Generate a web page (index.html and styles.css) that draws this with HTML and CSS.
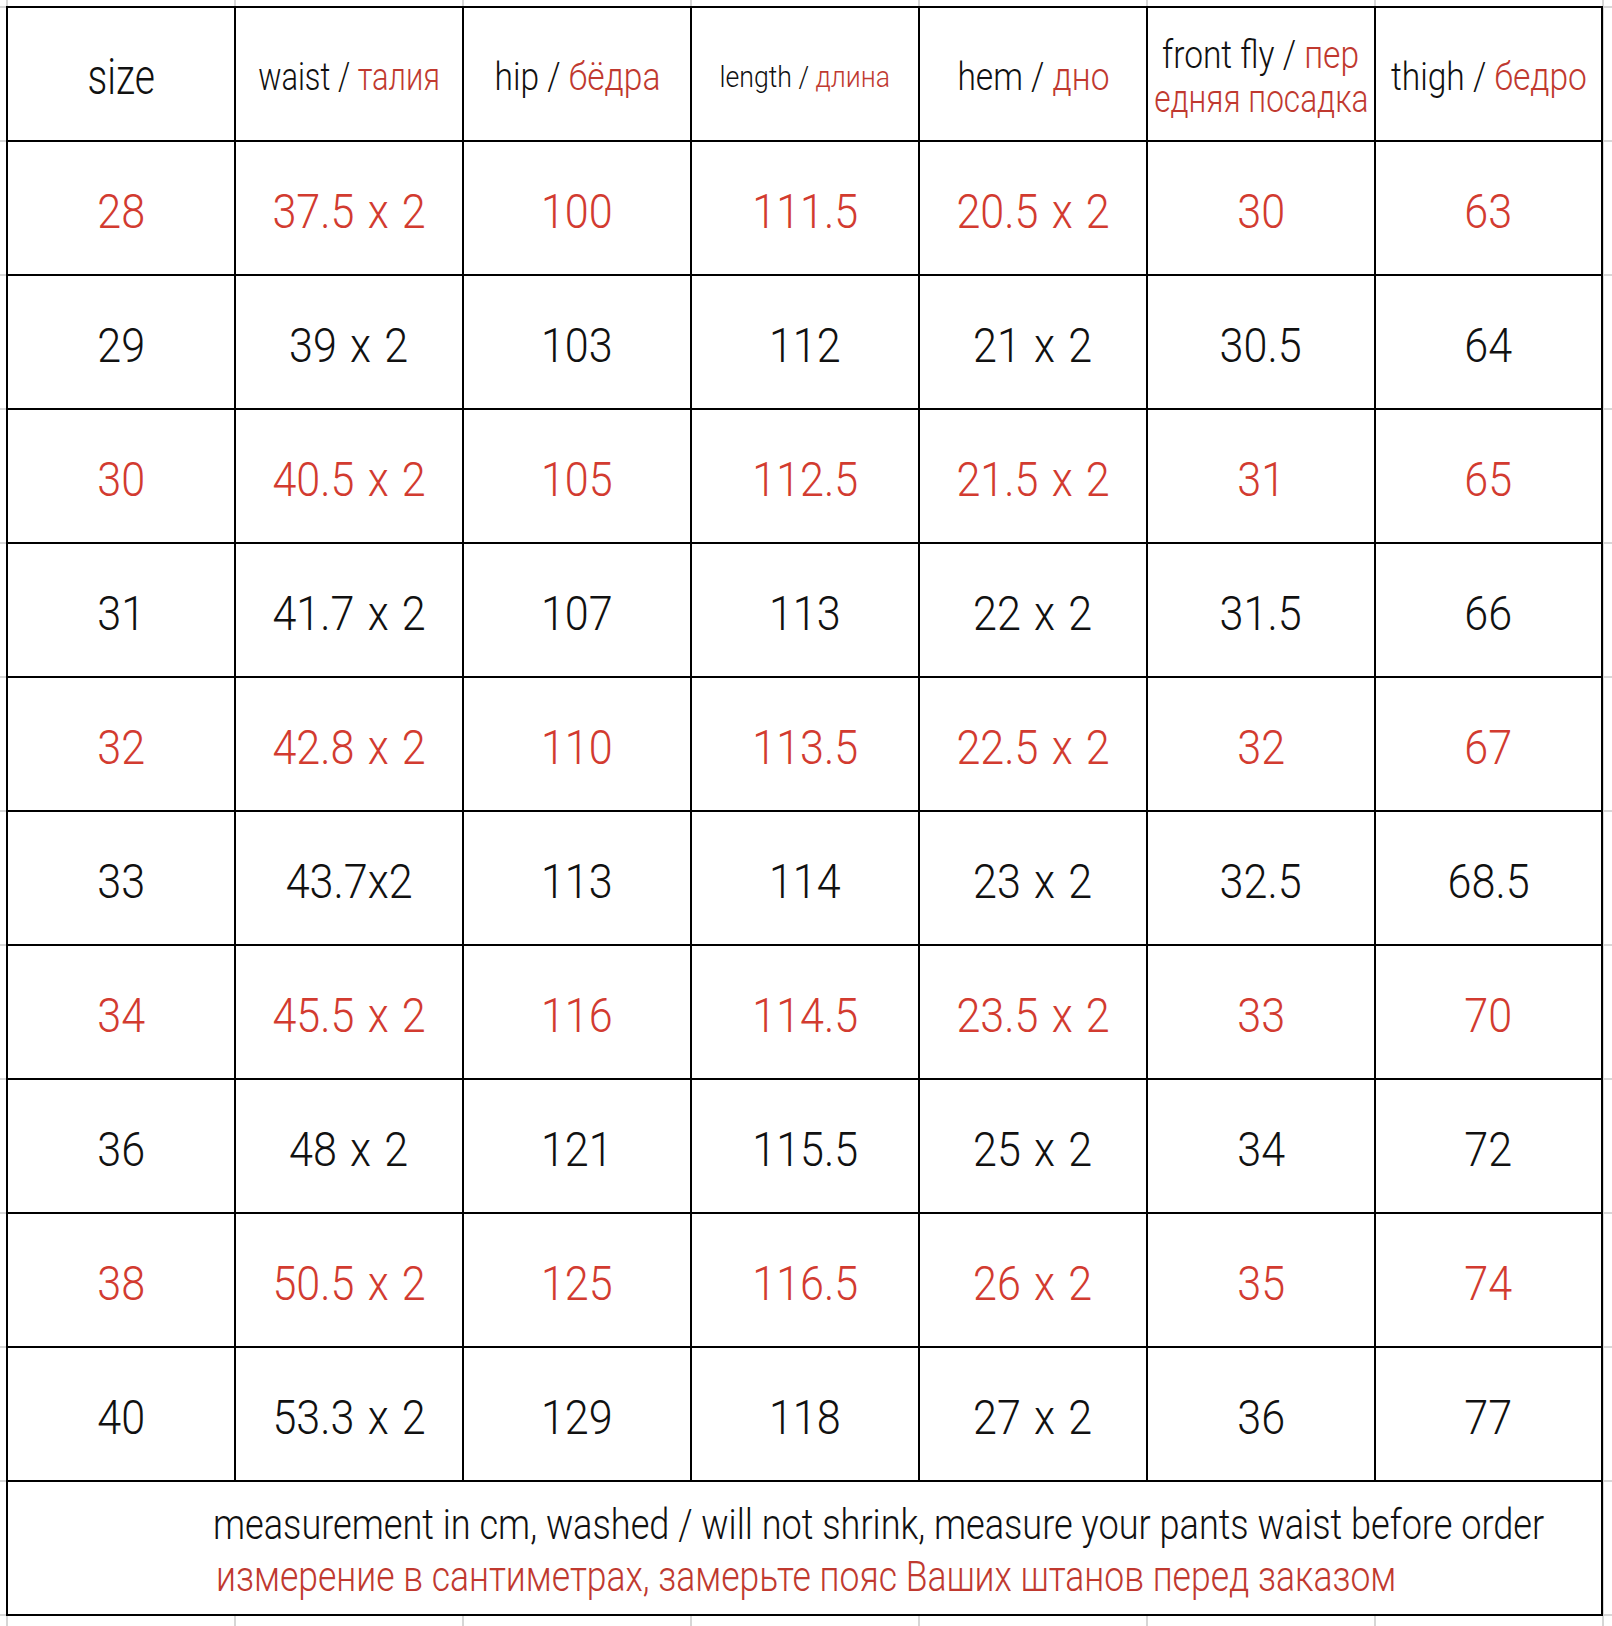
FILE: index.html
```html
<!DOCTYPE html>
<html lang="ru">
<head>
<meta charset="utf-8">
<title>Size chart</title>
<link rel="stylesheet" href="styles.css">
</head>
<body>
<div class="sheet">
  <div class="chart">
    <div class="cell head"><span class="t big">size</span></div>
    <div class="cell head"><span class="t hd narrow">waist / <em>талия</em></span></div>
    <div class="cell head"><span class="t hd">hip / <em>бёдра</em></span></div>
    <div class="cell head"><span class="t sm">length / <em>длина</em></span></div>
    <div class="cell head"><span class="t hd">hem / <em>дно</em></span></div>
    <div class="cell head stack">
      <span class="t hd line">front fly / <em>пер</em></span>
      <span class="t hd line second"><em>едняя посадка</em></span>
    </div>
    <div class="cell head"><span class="t hd">thigh / <em>бедро</em></span></div>

    <div class="cell red"><span class="t num">28</span></div>
    <div class="cell red"><span class="t num">37.5 x 2</span></div>
    <div class="cell red"><span class="t num">100</span></div>
    <div class="cell red"><span class="t num">111.5</span></div>
    <div class="cell red"><span class="t num">20.5 x 2</span></div>
    <div class="cell red"><span class="t num">30</span></div>
    <div class="cell red"><span class="t num">63</span></div>

    <div class="cell"><span class="t num">29</span></div>
    <div class="cell"><span class="t num">39 x 2</span></div>
    <div class="cell"><span class="t num">103</span></div>
    <div class="cell"><span class="t num">112</span></div>
    <div class="cell"><span class="t num">21 x 2</span></div>
    <div class="cell"><span class="t num">30.5</span></div>
    <div class="cell"><span class="t num">64</span></div>

    <div class="cell red"><span class="t num">30</span></div>
    <div class="cell red"><span class="t num">40.5 x 2</span></div>
    <div class="cell red"><span class="t num">105</span></div>
    <div class="cell red"><span class="t num">112.5</span></div>
    <div class="cell red"><span class="t num">21.5 x 2</span></div>
    <div class="cell red"><span class="t num">31</span></div>
    <div class="cell red"><span class="t num">65</span></div>

    <div class="cell"><span class="t num">31</span></div>
    <div class="cell"><span class="t num">41.7 x 2</span></div>
    <div class="cell"><span class="t num">107</span></div>
    <div class="cell"><span class="t num">113</span></div>
    <div class="cell"><span class="t num">22 x 2</span></div>
    <div class="cell"><span class="t num">31.5</span></div>
    <div class="cell"><span class="t num">66</span></div>

    <div class="cell red"><span class="t num">32</span></div>
    <div class="cell red"><span class="t num">42.8 x 2</span></div>
    <div class="cell red"><span class="t num">110</span></div>
    <div class="cell red"><span class="t num">113.5</span></div>
    <div class="cell red"><span class="t num">22.5 x 2</span></div>
    <div class="cell red"><span class="t num">32</span></div>
    <div class="cell red"><span class="t num">67</span></div>

    <div class="cell"><span class="t num">33</span></div>
    <div class="cell"><span class="t num">43.7x2</span></div>
    <div class="cell"><span class="t num">113</span></div>
    <div class="cell"><span class="t num">114</span></div>
    <div class="cell"><span class="t num">23 x 2</span></div>
    <div class="cell"><span class="t num">32.5</span></div>
    <div class="cell"><span class="t num">68.5</span></div>

    <div class="cell red"><span class="t num">34</span></div>
    <div class="cell red"><span class="t num">45.5 x 2</span></div>
    <div class="cell red"><span class="t num">116</span></div>
    <div class="cell red"><span class="t num">114.5</span></div>
    <div class="cell red"><span class="t num">23.5 x 2</span></div>
    <div class="cell red"><span class="t num">33</span></div>
    <div class="cell red"><span class="t num">70</span></div>

    <div class="cell"><span class="t num">36</span></div>
    <div class="cell"><span class="t num">48 x 2</span></div>
    <div class="cell"><span class="t num">121</span></div>
    <div class="cell"><span class="t num">115.5</span></div>
    <div class="cell"><span class="t num">25 x 2</span></div>
    <div class="cell"><span class="t num">34</span></div>
    <div class="cell"><span class="t num">72</span></div>

    <div class="cell red"><span class="t num">38</span></div>
    <div class="cell red"><span class="t num">50.5 x 2</span></div>
    <div class="cell red"><span class="t num">125</span></div>
    <div class="cell red"><span class="t num">116.5</span></div>
    <div class="cell red"><span class="t num">26 x 2</span></div>
    <div class="cell red"><span class="t num">35</span></div>
    <div class="cell red"><span class="t num">74</span></div>

    <div class="cell"><span class="t num">40</span></div>
    <div class="cell"><span class="t num">53.3 x 2</span></div>
    <div class="cell"><span class="t num">129</span></div>
    <div class="cell"><span class="t num">118</span></div>
    <div class="cell"><span class="t num">27 x 2</span></div>
    <div class="cell"><span class="t num">36</span></div>
    <div class="cell"><span class="t num">77</span></div>

    <div class="cell note">
      <span class="t ft">measurement in cm, washed / will not shrink, measure your pants waist before order</span>
      <span class="t ft redtxt">измерение в сантиметрах, замерьте пояс Ваших штанов перед заказом</span>
    </div>
  </div>
</div>
</body>
</html>
```
FILE: styles.css
```css
html {
  background-color: #fff;
  background-image:
    linear-gradient(to right, #d6d6d6 2px, transparent 2px),
    linear-gradient(to bottom, #d6d6d6 2px, transparent 2px);
  background-size: 228px 134px;
  background-position: 6px 6px;
}

body {
  margin: 0;
  padding: 6px 0 0 6px;
  font-family: Roboto, "Noto Sans", sans-serif;
  font-weight: 300;
  color: #111;
}

.chart {
  display: grid;
  grid-template-columns: repeat(6, 228px) 227px;
  grid-auto-rows: 134px;
  width: 1597px;
  border-left: 2px solid #000;
  border-top: 2px solid #000;
  box-sizing: border-box;
}

.cell {
  background: #fff;
  border-right: 2px solid #000;
  border-bottom: 2px solid #000;
  display: flex;
  align-items: center;
  justify-content: center;
  text-align: center;
  padding-top: 6px;
  white-space: nowrap;
}

.t {
  display: inline-block;
  transform-origin: center center;
}

.t em {
  font-style: normal;
  color: #c0392f;
}

.big {
  font-size: 50px;
  transform: scaleX(0.78);
}

.hd {
  font-size: 39px;
  transform: scaleX(0.86);
}

.hd.narrow {
  transform: scaleX(0.79);
}

.stack {
  flex-direction: column;
}

.line {
  line-height: 44px;
}

.line.second {
  transform: scaleX(0.81);
}

.sm {
  font-size: 29px;
  transform: scaleX(0.92);
}

.num {
  font-size: 49px;
  transform: scaleX(0.88);
  word-spacing: 3px;
}

.red .num {
  color: #d23b30;
}

.note {
  grid-column: 1 / -1;
  flex-direction: column;
  align-items: flex-start;
  justify-content: center;
  padding-left: 205px;
  text-align: left;
}

.ft {
  font-size: 42px;
  line-height: 52px;
  transform-origin: left center;
  transform: scaleX(0.86);
}

.ft.redtxt {
  color: #c0392f;
  transform: scaleX(0.845);
  margin-left: 3px;
}
```
